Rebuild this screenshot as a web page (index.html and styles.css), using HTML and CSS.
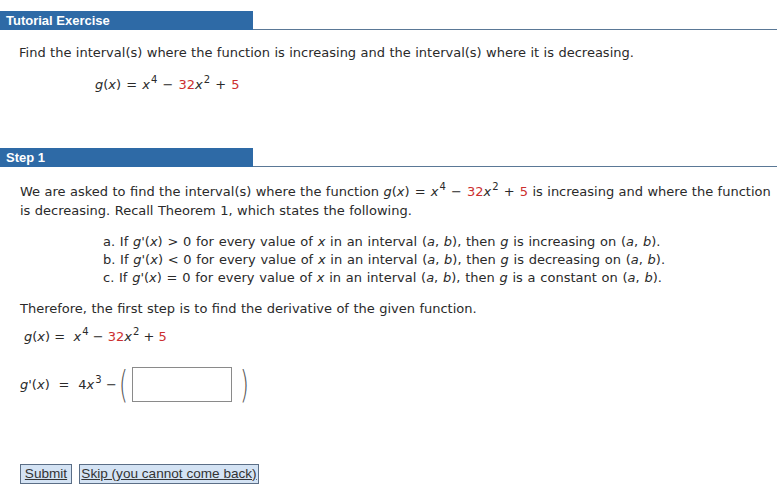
FILE: index.html
```html
<!DOCTYPE html>
<html>
<head>
<meta charset="utf-8">
<link rel="stylesheet" href="styles.css">
</head>
<body>
<div class="hdr first"><div class="hdr-title">Tutorial Exercise</div><div class="hdr-line"></div></div>
<p class="intro">Find the interval(s) where the function is increasing and the interval(s) where it is decreasing.</p>
<p class="formula math"><i>g</i>(<i>x</i>) = <i>x</i><sup>4</sup> &minus; <span class="red">32</span><i>x</i><sup>2</sup> + <span class="red">5</span></p>

<div class="hdr step"><div class="hdr-title">Step 1</div><div class="hdr-line"></div></div>
<p class="para">We are asked to find the interval(s) where the function <span class="math"><i>g</i>(<i>x</i>) = <i>x</i><sup>4</sup> &minus; <span class="red">32</span><i>x</i><sup>2</sup> + <span class="red">5</span></span> is increasing and where the function<br>is decreasing. Recall Theorem 1, which states the following.</p>
<div class="theorem">
<div>a. If <i>g</i>'(<i>x</i>) &gt; 0 for every value of <i>x</i> in an interval (<i>a</i>, <i>b</i>), then <i>g</i> is increasing on (<i>a</i>, <i>b</i>).</div>
<div>b. If <i>g</i>'(<i>x</i>) &lt; 0 for every value of <i>x</i> in an interval (<i>a</i>, <i>b</i>), then <i>g</i> is decreasing on (<i>a</i>, <i>b</i>).</div>
<div>c. If <i>g</i>'(<i>x</i>) = 0 for every value of <i>x</i> in an interval (<i>a</i>, <i>b</i>), then <i>g</i> is a constant on (<i>a</i>, <i>b</i>).</div>
</div>
<p class="para2">Therefore, the first step is to find the derivative of the given function.</p>
<p class="formula2 math"><i>g</i>(<i>x</i>)&nbsp;= &nbsp;<i>x</i><sup>4</sup> &minus; <span class="red">32</span><i>x</i><sup>2</sup> + <span class="red">5</span></p>
<div class="deriv">
<span class="lhs"><i>g</i>'(<i>x</i>) &nbsp;= &nbsp;</span><span class="rhs">4<i>x</i><sup>3</sup> &minus;</span>
<span class="paren">(</span><span class="box"></span><span class="paren">)</span>
</div>
<div class="buttons">
<button class="btn btn-submit">Submit</button>
<button class="btn btn-skip">Skip (you cannot come back)</button>
</div>
</body>
</html>
```
FILE: styles.css
```css
html, body {
  margin: 0;
  padding: 0;
  background: #fff;
}
body {
  font-family: "DejaVu Sans", Verdana, sans-serif;
  font-size: 13px;
  color: #2a2a2a;
  word-spacing: 0.3px;
}
p { margin: 0; }
sup {
  font-size: 10px;
  vertical-align: 6px;
  line-height: 0;
  margin-left: 1px;
}
.math { word-spacing: 1px; }
.red { color: #cc2f2f; }
.hdr {
  display: flex;
  align-items: stretch;
}
.hdr.first { margin-top: 11px; }
.hdr.step { margin-top: 54px; }
.hdr-title {
  width: 247px;
  height: 19px;
  line-height: 19px;
  padding-left: 6px;
  background: #2e6aa6;
  color: #fff;
  font-family: "Liberation Sans", Arial, sans-serif;
  font-weight: bold;
  font-size: 13px;
  word-spacing: 0;
}
.hdr-line {
  flex: 1;
  border-bottom: 1px solid #5a7896;
}
.intro {
  margin: 14px 0 0 19px;
  line-height: 18px;
}
.formula {
  margin: 14px 0 0 95px;
  line-height: 18px;
}
.para {
  margin: 15px 0 0 20px;
  line-height: 19px;
  white-space: nowrap;
}
.theorem {
  margin: 13px 0 0 103px;
  line-height: 18px;
  word-spacing: 0.6px;
}
.para2 {
  margin: 13px 0 0 20px;
  line-height: 18px;
}
.formula2 {
  margin: 10px 0 0 24px;
  line-height: 18px;
  word-spacing: 0;
}
.deriv {
  display: flex;
  align-items: center;
  margin: 18px 0 0 20px;
  height: 40px;
}
.paren {
  font-family: "DejaVu Sans", sans-serif;
  font-size: 38px;
  font-weight: 200;
  line-height: 40px;
  color: #555;
  transform: scaleX(0.6);
  margin: 0 -1px;
}
.box {
  width: 98px;
  height: 33px;
  border: 1px solid #8a8a8a;
  background: #fff;
  margin: 0 6px 0 2px;
}
.buttons {
  display: flex;
  gap: 7px;
  margin: 60px 0 0 20px;
}
.btn {
  font-family: "Liberation Sans", Arial, sans-serif;
  font-size: 13.6px;
  color: #333;
  text-decoration: underline;
  background: #d4e3f4;
  border: 1px solid #5b6e86;
  height: 20px;
  padding: 0;
  line-height: 18px;
  border-radius: 0;
  margin: 0;
  text-align: center;
  word-spacing: 0;
  white-space: nowrap;
}
.btn-submit { width: 52px; }
.btn-skip { width: 180px; }
```
